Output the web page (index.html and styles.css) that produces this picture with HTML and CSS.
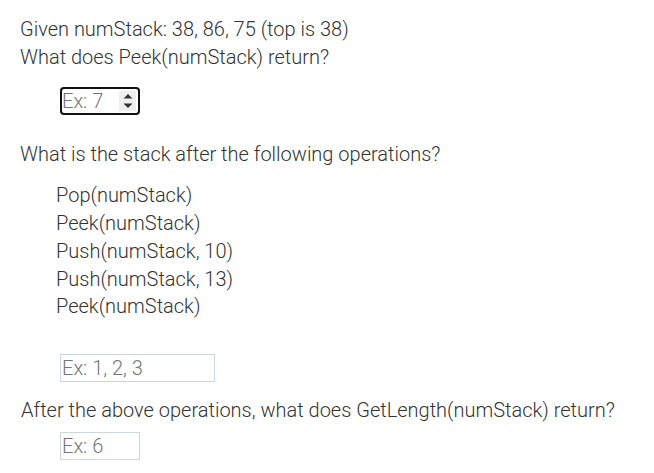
FILE: index.html
```html
<!DOCTYPE html>
<html>
<head>
<meta charset="utf-8">
<link rel="stylesheet" href="styles.css">
</head>
<body>
<div class="page">
  <div class="q1">
    <p class="line">Given numStack: 38, 86, 75 (top is 38)</p>
    <p class="line">What does Peek(numStack) return?</p>
  </div>
  <div class="ans ans1">
    <div class="box box-num">
      <span class="ph">Ex: 7</span>
      <span class="spin">
        <svg width="10" height="16" viewBox="0 0 10 16"><path d="M5 1 L9.5 5.5 L0.5 5.5 Z M5 15 L9.5 10.5 L0.5 10.5 Z" fill="#333"/></svg>
      </span>
    </div>
  </div>
  <p class="line q2">What is the stack after the following operations?</p>
  <div class="ops">
    <p class="line">Pop(numStack)</p>
    <p class="line">Peek(numStack)</p>
    <p class="line">Push(numStack, 10)</p>
    <p class="line">Push(numStack, 13)</p>
    <p class="line">Peek(numStack)</p>
  </div>
  <div class="ans ans2">
    <div class="box box-wide"><span class="ph">Ex: 1, 2, 3</span></div>
  </div>
  <p class="line q3">After the above operations, what does GetLength(numStack) return?</p>
  <div class="ans ans3">
    <div class="box box-small"><span class="ph">Ex: 6</span></div>
  </div>
</div>
</body>
</html>
```

FILE: styles.css
```css
html, body {
  margin: 0;
  padding: 0;
  background: #fff;
}
body {
  font-family: Roboto, "Liberation Sans", sans-serif;
  font-weight: 300;
  font-size: 20px;
  color: #333;
}
.page {
  padding: 15px 0 0 20px;
}
.line {
  margin: 0;
  line-height: 28.3px;
  white-space: nowrap;
}
.ans {
  padding-left: 40px;
}
.ans1 {
  margin-top: 15px;
}
.box {
  box-sizing: border-box;
  display: flex;
  align-items: center;
  height: 28px;
  border: 1px solid #cdd6dd;
  color: #757575;
  padding-left: 1px;
}
.box-num {
  width: 80px;
  border: 2px solid #111;
  border-radius: 4px;
  padding-left: 0;
  justify-content: space-between;
}
.spin {
  width: 17px;
  height: 20px;
  background: #efefef;
  display: flex;
  align-items: center;
  justify-content: center;
  margin-right: 2px;
}
.box-wide { width: 155px; }
.box-small { width: 80px; }
.q2 {
  margin-top: 25.4px;
}
.ops {
  padding-left: 36px;
  margin-top: 14.2px;
}
.ops .line {
  line-height: 27.75px;
}
.ans2 {
  margin-top: 33px;
}
.q3 {
  margin-top: 14.25px;
  margin-left: 1px;
}
.ans3 {
  margin-top: 7px;
}
```
